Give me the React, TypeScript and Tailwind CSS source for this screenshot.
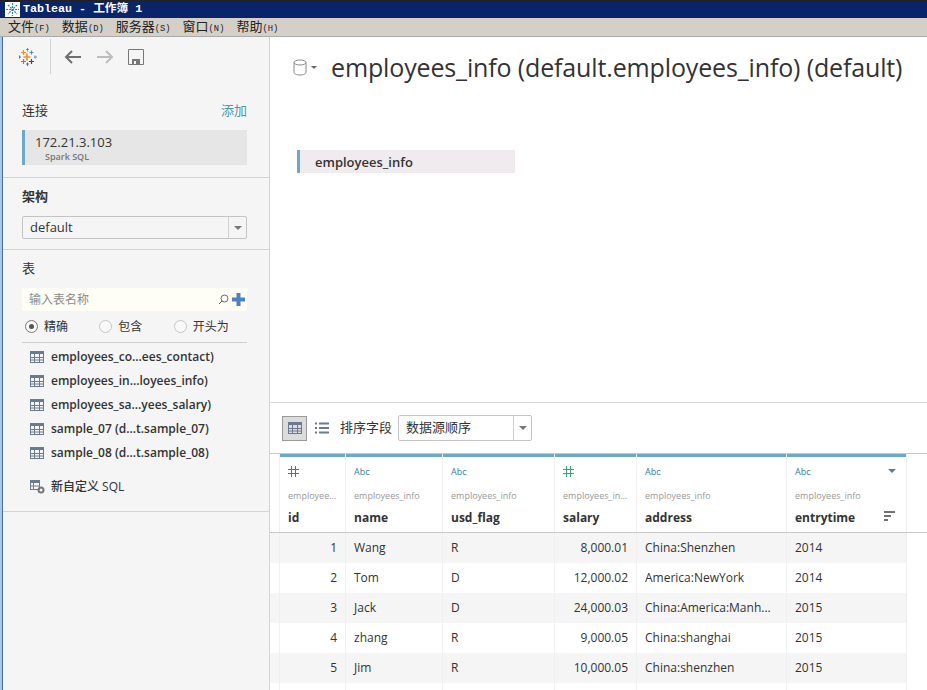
import React from "react";

const FONT = "font-['Open_Sans','Noto_Sans_CJK_SC',sans-serif]";

const TABLES = [
  "employees_co...ees_contact)",
  "employees_in...loyees_info)",
  "employees_sa...yees_salary)",
  "sample_07 (d...t.sample_07)",
  "sample_08 (d...t.sample_08)",
];

const COLUMNS = [
  { width: "w-[66px]", type: "#", color: "#2f7f9e", source: "employee...", name: "id" },
  { width: "w-[97px]", type: "Abc", color: "#2f7f9e", source: "employees_info", name: "name" },
  { width: "w-[112px]", type: "Abc", color: "#2f7f9e", source: "employees_info", name: "usd_flag" },
  { width: "w-[82px]", type: "#", color: "#3f9f7f", source: "employees_in...", name: "salary" },
  { width: "w-[150px]", type: "Abc", color: "#2f7f9e", source: "employees_info", name: "address" },
  { width: "w-[120px]", type: "Abc", color: "#2f7f9e", source: "employees_info", name: "entrytime" },
];

const ROWS = [
  ["1", "Wang", "R", "8,000.01", "China:Shenzhen", "2014"],
  ["2", "Tom", "D", "12,000.02", "America:NewYork", "2014"],
  ["3", "Jack", "D", "24,000.03", "China:America:Manh...", "2015"],
  ["4", "zhang", "R", "9,000.05", "China:shanghai", "2015"],
  ["5", "Jim", "R", "10,000.05", "China:shenzhen", "2015"],
  ["", "", "", "", "", ""],
];

const MENUS = [
  ["文件", "(F)"],
  ["数据", "(D)"],
  ["服务器", "(S)"],
  ["窗口", "(N)"],
  ["帮助", "(H)"],
];

const TableIcon = ({ className = "text-[#6b7a90]" }: { className?: string }) => (
  <svg width="14" height="12" viewBox="0 0 14 12" className={className}>
    <rect x="0.5" y="0.5" width="13" height="11" fill="none" stroke="currentColor" />
    <rect x="0" y="0" width="14" height="3" fill="currentColor" />
    <path d="M0 6.500h14M0 9h14M4.500 0v12M9.500 0v12" stroke="currentColor" strokeWidth="1" />
  </svg>
);

const TableauLogo = () => (
  <svg width="18" height="18" viewBox="0 0 18 18">
    <path d="M8 5.500v7M4.500 9h7" stroke="#f28e2b" strokeWidth="1.600" />
    <path d="M4.500 2v5M2 4.500h5" stroke="#f28e2b" strokeWidth="1.200" />
    <path d="M12.500 2.500v4M10.500 4.500h4" stroke="#5b8fa8" strokeWidth="1.100" />
    <path d="M8.500 0v3.500M7 1.500h3" stroke="#5b8fa8" strokeWidth="0.900" />
    <path d="M4.500 11v5M2 13.500h5" stroke="#e15759" strokeWidth="1.200" />
    <path d="M12.500 11v5M10 13.500h5" stroke="#1f4e8c" strokeWidth="1.200" />
    <path d="M0.500 7.500v3M0 9h2" stroke="#7b4f9d" strokeWidth="0.900" />
    <path d="M16 7.500v3M15 9h3" stroke="#5b8fa8" strokeWidth="0.900" />
    <path d="M8.500 14.500v3.500M7 16h3" stroke="#7b4f9d" strokeWidth="0.900" />
  </svg>
);

const Radio = ({ label, checked }: { label: string; checked?: boolean }) => (
  <div className="flex w-[75px] items-center gap-[6px]">
    <span className={`flex h-[13px] w-[13px] items-center justify-center rounded-full border ${checked ? "border-[#777]" : "border-[#c4c8c4]"} bg-[#f9f9f9]`}>
      {checked && <span className="h-[5px] w-[5px] rounded-full bg-[#555]" />}
    </span>
    <span className="text-[12px] leading-none text-[#333]">{label}</span>
  </div>
);

const Caret = () => (
  <span className="h-0 w-0 border-x-[4px] border-t-[4px] border-x-transparent border-t-[#777]" />
);

const Sidebar = () => (
  <aside className="flex w-[267px] shrink-0 flex-col border-r border-[#d4d4d4] bg-[#f5f5f5]">
    <div className="flex h-[39px] items-center">
      <div className="flex h-[35px] w-[48px] items-center justify-center border-r border-[#d4d4d4] pl-[2px]">
        <TableauLogo />
      </div>
      <svg width="18" height="14" viewBox="0 0 18 14" className="ml-[13px]">
        <path d="M17 7H2M8 1L2 7l6 6" fill="none" stroke="#6e6e6e" strokeWidth="2" />
      </svg>
      <svg width="18" height="14" viewBox="0 0 18 14" className="ml-[14px]">
        <path d="M1 7h15M10 1l6 6-6 6" fill="none" stroke="#bdbdbd" strokeWidth="2" />
      </svg>
      <svg width="16" height="16" viewBox="0 0 16 16" className="ml-[14px]">
        <path d="M0.500 0.500h15v15h-15z" fill="none" stroke="#777" />
        <path d="M4 15v-5h8v5z" fill="#777" />
        <path d="M6 15v-3h2v3z" fill="#f5f5f5" />
      </svg>
    </div>

    <div className="border-b border-[#d4d4d4] pb-[12px] pl-[19px] pr-[22px] pt-[25px]">
      <div className="mb-[9px] flex h-[20px] items-center justify-between">
        <span className="text-[13px] text-[#333]">连接</span>
        <span className="text-[13px] text-[#4a9bb0]">添加</span>
      </div>
      <div className="h-[35px] border-l-[3px] border-[#6aa9c9] bg-[#e6e6e6] pl-[10px] pt-[3px]">
        <div className="text-[13px] font-medium leading-[18px] text-[#333]">172.21.3.103</div>
        <div className="pl-[10px] text-[9px] font-semibold leading-[12px] text-[#777]">Spark SQL</div>
      </div>
    </div>

    <div className="border-b border-[#d4d4d4] pb-[10px] pl-[19px] pr-[22px] pt-[8px]">
      <div className="mb-[10px] text-[13px] font-bold leading-[20px] text-[#333]">架构</div>
      <div className="flex h-[23px] items-center rounded-[2px] border border-[#c4c4c4] bg-[#f5f5f5]">
        <span className="flex-1 pl-[7px] text-[13px] text-[#333]">default</span>
        <span className="flex h-full w-[18px] items-center justify-center border-l border-[#d0d0d0]">
          <Caret />
        </span>
      </div>
    </div>

    <div className="border-b border-[#d4d4d4] pb-[12px] pt-[8px]">
      <div className="mb-[10px] ml-[19px] mr-[22px] text-[13px] leading-[20px] text-[#333]">表</div>
      <div className="ml-[19px] mr-[22px] flex h-[23px] items-center bg-[#fefef6] pl-[7px] pr-[2px]">
        <span className="flex-1 text-[12px] text-[#8c8c8c]">输入表名称</span>
        <svg width="11" height="11" viewBox="0 0 11 11" className="mr-[3px]">
          <circle cx="6.500" cy="4.500" r="3.500" fill="none" stroke="#666" />
          <path d="M4 7L1 10" stroke="#666" />
        </svg>
        <svg width="13" height="13" viewBox="0 0 13 13">
          <path d="M4.500 0h4v4.500H13v4H8.500V13h-4V8.500H0v-4h4.500z" fill="#4f81bd" />
        </svg>
      </div>
      <div className="ml-[19px] mr-[22px] flex h-[32px] items-center gap-px border-b border-[#cfcfcf] pl-[3px]">
        <Radio label="精确" checked />
        <Radio label="包含" />
        <Radio label="开头为" />
      </div>
      <ul className="mt-[2px] flex flex-col">
        {TABLES.map((table) => (
          <li key={table} className="flex h-[24px] items-center gap-[7px] pl-[27px]">
            <TableIcon />
            <span className="text-[12px] font-semibold text-[#333]">{table}</span>
          </li>
        ))}
      </ul>
      <div className="mt-[10px] flex h-[24px] items-center gap-[6px] pl-[27px]">
        <svg width="15" height="14" viewBox="0 0 15 14" className="text-[#6b7a90]">
          <rect x="0.500" y="0.500" width="9" height="9" fill="none" stroke="currentColor" />
          <rect x="0" y="0" width="10" height="3" fill="currentColor" />
          <path d="M0 6h10M3.500 0v10" stroke="currentColor" />
          <circle cx="11" cy="10" r="2.500" fill="none" stroke="#777" strokeWidth="2" />
        </svg>
        <span className="text-[12px] font-medium text-[#333]">新自定义 SQL</span>
      </div>
    </div>
  </aside>
);

const Grid = () => (
  <div className="flex shrink-0 flex-col">
    <div className="h-px bg-[#c8c8c8]" />
    <div className="flex">
      <div className="w-[10px] border-r border-[#f0f0f0]" />
      {COLUMNS.map((col, i) => (
        <div key={col.name} className={`${col.width} flex h-[78px] flex-col border-r border-[#f0f0f0]`}>
          <div className="h-[3px] bg-[#6aa9c9]" />
          <div className="relative flex h-[22px] items-end pl-[8px]">
            {col.type === "#" ? (
              <svg width="11" height="11" viewBox="0 0 11 11" className="mb-[2px]">
                <path d="M3.500 0v11M7.500 0v11M0 3.500h11M0 7.500h11" fill="none" stroke={col.color} />
              </svg>
            ) : (
              <span className="text-[9px] leading-[14px]" style={{ color: col.color }}>Abc</span>
            )}
            {i === 5 && <span className="absolute right-[10px] top-[12px] h-0 w-0 border-x-[4px] border-t-[4px] border-x-transparent border-t-[#6b7a90]" />}
          </div>
          <div className="mt-[10px] h-[14px] pl-[8px] text-[9px] leading-[14px] text-[#999]">{col.source}</div>
          <div className="relative mt-[6px] pl-[8px] text-[12px] font-bold leading-[18px] text-[#333]">
            {col.name}
            {i === 5 && (
              <svg width="11" height="10" viewBox="0 0 11 10" className="absolute right-[11px] top-[2px]">
                <path d="M0 1h11M0 5h7M0 9h4" stroke="#444" strokeWidth="1.500" />
              </svg>
            )}
          </div>
        </div>
      ))}
      <div className="flex-1" />
    </div>
    <div className="h-px bg-[#c8c8c8]" />
    {ROWS.map((row, r) => (
      <div key={r} className={`flex h-[30px] w-[637px] ${r % 2 === 0 ? "bg-[#f5f5f5]" : "bg-white"}`}>
        <div className="w-[10px] border-r border-[#f0f0f0]" />
        {row.map((cell, c) => (
          <div
            key={c}
            className={`${COLUMNS[c].width} flex items-center border-r border-[#f0f0f0] px-[8px] text-[12px] text-[#333] ${c === 0 || c === 3 ? "justify-end" : ""}`}
          >
            <span className="whitespace-nowrap">{cell}</span>
          </div>
        ))}
      </div>
    ))}
  </div>
);

const App = () => {
  return (
    <div className={`flex h-[690px] w-[927px] flex-col overflow-hidden bg-white ${FONT}`}>
      <div className="flex h-[18px] items-center gap-[3px] border-t border-[#222] bg-[#0a246a] pl-[5px]">
        <svg width="15" height="15" viewBox="0 0 15 15">
          <rect width="15" height="15" fill="#fff" />
          <path d="M7.500 1v13M1 7.500h13M3 3l9 9M12 3l-9 9" stroke="#2f7fb5" strokeWidth="1.200" strokeDasharray="2 1" />
        </svg>
        <span className="font-['Liberation_Mono','Noto_Sans_CJK_SC',monospace] text-[11.7px] font-bold leading-none text-white">Tableau - 工作簿 1</span>
      </div>
      <div className="flex h-[19px] items-center gap-[12px] border-b border-[#aaa] bg-[#d4d0c8] pl-[8px] leading-none text-[#222]">
        {MENUS.map(([label, key]) => (
          <span key={key} className="text-[13px]">
            {label}
            <span className="font-['Liberation_Mono',monospace] text-[8.800px]">{key}</span>
          </span>
        ))}
      </div>
      <div className="flex min-h-0 flex-1 overflow-hidden">
        <div className="w-[2px] shrink-0 bg-[#a8c8e8]" />
        <div className="w-px shrink-0 bg-[#4a6a90]" />
        <Sidebar />
        <main className="flex min-w-0 flex-1 flex-col overflow-hidden">
          <div className="flex h-[366px] shrink-0 flex-col border-b border-[#d8d8d8]">
            <div className="flex h-[60px] shrink-0 items-center pl-[23px]">
              <svg width="14" height="17" viewBox="0 0 14 17">
                <ellipse cx="7" cy="3.500" rx="6" ry="2.500" fill="none" stroke="#888" />
                <path d="M1 3.500v10c0 1.400 2.700 2.500 6 2.500s6-1.100 6-2.500v-10" fill="none" stroke="#888" />
              </svg>
              <span className="ml-[4px] mr-[14px] h-0 w-0 border-x-[3px] border-t-[3px] border-x-transparent border-t-[#666]" />
              <h1 className="whitespace-nowrap text-[25px] leading-none tracking-[-0.14px] text-[#333]">
                employees_info (default.employees_info) (default)
              </h1>
            </div>
            <div className="ml-[27px] mt-[53px] flex h-[23px] w-[218px] items-center border-l-[3px] border-[#6aa9c9] bg-[#efebef] pl-[15px] pt-[2px] text-[13px] font-semibold text-[#333]">
              employees_info
            </div>
          </div>
          <div className="flex h-[50px] shrink-0 items-center pl-[12px]">
            <span className="flex h-[25px] w-[25px] items-center justify-center border border-[#999] bg-[#dcdcdc]">
              <TableIcon />
            </span>
            <svg width="14" height="12" viewBox="0 0 14 12" className="ml-[8px]">
              <path d="M0 1.500h2M4 1.500h10M0 6h2M4 6h10M0 10.500h2M4 10.500h10" stroke="#6b7a90" strokeWidth="2" />
            </svg>
            <span className="ml-[11px] text-[13px] text-[#333]">排序字段</span>
            <div className="ml-[6px] flex h-[26px] w-[134px] items-center rounded-[2px] border border-[#c4c4c4]">
              <span className="flex-1 pl-[7px] text-[13px] text-[#333]">数据源顺序</span>
              <span className="flex h-full w-[18px] items-center justify-center border-l border-[#d0d0d0]">
                <Caret />
              </span>
            </div>
          </div>
          <Grid />
        </main>
      </div>
    </div>
  );
};

export default App;
